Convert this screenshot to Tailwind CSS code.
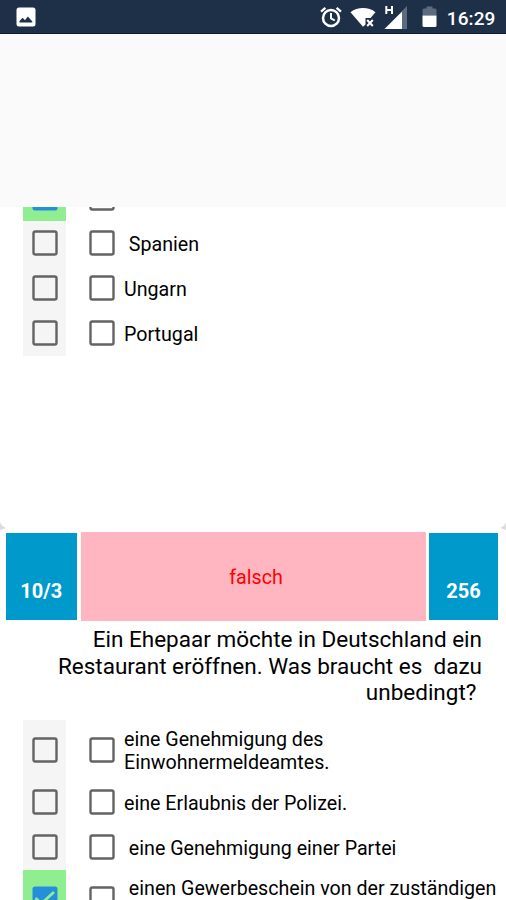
<!DOCTYPE html>
<html lang="de">
<head>
    <meta charset="UTF-8" />
    <meta name="viewport" content="width=device-width, initial-scale=1.0"/>
    <title>Einbürgerungstest</title>
    <script src="https://cdn.jsdelivr.net/npm/@tailwindcss/browser@4"></script>
</head>

<body class="bg-white text-black font-['Roboto',sans-serif] h-[900px] overflow-hidden flex flex-col">

    <!-- Checkbox-Symbole -->
    <svg class="hidden">
        <symbol id="box" viewBox="0 0 26 26">
            <rect x="1.5" y="1.5" width="23" height="23" rx="1.8" fill="none" stroke="#636363" stroke-width="2.4"/>
        </symbol>
        <symbol id="checked" viewBox="0 0 26 26">
            <rect x="0.5" y="0.5" width="25" height="25" rx="2.5" fill="#258fdc"/>
            <path d="M3.5 12l6 5.500L22 6" fill="none" stroke="#90ee90" stroke-width="2.8"/>
        </symbol>
    </svg>

    <!-- Statusleiste -->
    <header class="h-[34px] shrink-0 bg-[#1e3048] border-b border-[#0d1530] text-white flex items-center justify-between pl-4 pr-[10.5px]">
        <svg class="w-5 h-5" viewBox="0 0 20 20">
            <rect x="0.5" y="0.5" width="19" height="19" rx="2.5" fill="#fff"/>
            <path d="M3.5 15.5V14l3.2-3.2 2.2 2.4 3-3.8 4.4 5v1.1z" fill="#1e3048"/>
        </svg>
        <div class="flex items-center">
            <svg class="w-[22px] h-[22px] mr-[8px]" viewBox="0 0 22 22" fill="none" stroke="#fff">
                <circle cx="11" cy="12" r="8" stroke-width="2.5"/>
                <path d="M11 7v5.300l3.800 2.200" stroke-width="2"/>
                <path d="M1 5.600l4.400-3.700M21 5.600l-4.400-3.700" stroke-width="2.300"/>
            </svg>
            <svg class="w-[26px] h-[22px] mr-[7.5px]" viewBox="0 0 26 22">
                <path d="M0.500 6.200C7.500.6 18.500.6 25.500 6.200L20.500 12H15.500V18.500L13 20.800z" fill="#fff"/>
                <path d="M17.200 14l5.600 6M22.800 14l-5.600 6" stroke="#fff" stroke-width="2"/>
            </svg>
            <svg class="w-[24px] h-[26px] mr-[14px]" viewBox="0 0 24 26">
                <path d="M18 7L23 2v23h-5z" fill="#5c6b7e"/>
                <path d="M0.500 25L18 7.500V25z" fill="#fff"/>
                <path d="M2.300 2v8M8 2v8M2.300 6H8" stroke="#fff" stroke-width="2"/>
            </svg>
            <svg class="w-[15px] h-[22px] mr-[10px]" viewBox="0 0 15 22">
                <path d="M0.500 9.500V4q0-1.500 1.500-1.500h2.500V0.500h6v2h2.500q1.500 0 1.500 1.500v5.500z" fill="#5c6b7e"/>
                <path d="M0.500 9.500h14v10q0 1.500-1.500 1.500H2q-1.500 0-1.500-1.500z" fill="#fff"/>
            </svg>
            <span class="text-[19px] leading-none font-medium tracking-[0.1px] pt-[3px]">16:29</span>
        </div>
    </header>

    <!-- Titelbereich -->
    <div class="h-[173px] shrink-0 bg-[#fafafa]"></div>

    <!-- Vorherige Frage -->
    <section class="h-[323px] shrink-0 overflow-hidden flex flex-col text-[19.65px] leading-[23px]">
        <div class="h-[13.5px] shrink-0 flex items-end overflow-hidden">
            <div class="w-[42.5px] h-[45px] shrink-0 ml-[23px] pl-[2px] bg-[#90ee90] flex items-center justify-center">
                <svg class="w-[26px] h-[26px]"><use href="#checked"/></svg>
            </div>
            <div class="h-[45px] ml-[23.5px] flex items-center">
                <svg class="w-[26px] h-[26px]"><use href="#box"/></svg>
            </div>
        </div>
        <div class="h-[45px] shrink-0 flex items-center">
            <div class="w-[42.5px] h-full ml-[23px] pl-[1.5px] bg-[#f5f5f5] flex items-center justify-center">
                <svg class="w-[26px] h-[26px]"><use href="#box"/></svg>
            </div>
            <svg class="w-[26px] h-[26px] ml-[23.5px]"><use href="#box"/></svg>
            <p class="ml-[9px] pt-[2px] whitespace-pre"> Spanien</p>
        </div>
        <div class="h-[45px] shrink-0 flex items-center">
            <div class="w-[42.5px] h-full ml-[23px] pl-[1.5px] bg-[#f5f5f5] flex items-center justify-center">
                <svg class="w-[26px] h-[26px]"><use href="#box"/></svg>
            </div>
            <svg class="w-[26px] h-[26px] ml-[23.5px]"><use href="#box"/></svg>
            <p class="ml-[9px] pt-[2px]">Ungarn</p>
        </div>
        <div class="h-[45px] shrink-0 flex items-center">
            <div class="w-[42.5px] h-full ml-[23px] pl-[1.5px] bg-[#f5f5f5] flex items-center justify-center">
                <svg class="w-[26px] h-[26px]"><use href="#box"/></svg>
            </div>
            <svg class="w-[26px] h-[26px] ml-[23.5px]"><use href="#box"/></svg>
            <p class="ml-[9px] pt-[2px]">Portugal</p>
        </div>
        <!-- Kartenecken -->
        <div class="mt-auto flex justify-between">
            <svg class="w-[6px] h-[8px]" viewBox="0 0 6 8"><path d="M0 0q1.500 4.500 6 6L0 8z" fill="#dcdcdc"/></svg>
            <svg class="w-[6px] h-[8px]" viewBox="0 0 6 8"><path d="M6 0q-1.500 4.500-6 6L6 8z" fill="#dcdcdc"/></svg>
        </div>
    </section>

    <!-- Frage 10/3 -->
    <section class="pt-[1.5px]">
        <div class="flex items-center pl-[6px] h-[89.5px]">
            <div class="w-[70.5px] h-[87px] bg-[#0099cc] text-white text-[20px] leading-[23px] font-bold flex items-end justify-center pb-[17px]">10/3</div>
            <div class="w-[345px] h-full ml-[4.500px] bg-[#ffb6c1] text-[#ff0000] text-[19.65px] leading-[23px] flex items-center justify-center pt-[3px] pl-[5px]">falsch</div>
            <div class="w-[69px] h-[87px] ml-[3px] bg-[#0099cc] text-white text-[20px] leading-[23px] font-bold flex items-end justify-center pb-[17px]">256</div>
        </div>

        <h1 class="h-[98.5px] pt-[5px] pr-[24px] text-[22.5px] leading-[26.700px] text-right whitespace-pre">Ein Ehepaar möchte in Deutschland ein
Restaurant eröffnen. Was braucht es  dazu
unbedingt? </h1>

        <div class="text-[19.65px] leading-[23px]">
            <div class="h-[60px] flex items-center">
                <div class="w-[42.5px] h-full ml-[23px] pl-[1.5px] bg-[#f5f5f5] flex items-center justify-center">
                    <svg class="w-[26px] h-[26px]"><use href="#box"/></svg>
                </div>
                <svg class="w-[26px] h-[26px] ml-[23.5px]"><use href="#box"/></svg>
                <p class="ml-[9px] pt-[2px]">eine Genehmigung des<br>Einwohnermeldeamtes.</p>
            </div>
            <div class="h-[45px] flex items-center">
                <div class="w-[42.5px] h-full ml-[23px] pl-[1.5px] bg-[#f5f5f5] flex items-center justify-center">
                    <svg class="w-[26px] h-[26px]"><use href="#box"/></svg>
                </div>
                <svg class="w-[26px] h-[26px] ml-[23.5px]"><use href="#box"/></svg>
                <p class="ml-[9px] pt-[2px]">eine Erlaubnis der Polizei.</p>
            </div>
            <div class="h-[45px] flex items-center">
                <div class="w-[42.5px] h-full ml-[23px] pl-[1.5px] bg-[#f5f5f5] flex items-center justify-center">
                    <svg class="w-[26px] h-[26px]"><use href="#box"/></svg>
                </div>
                <svg class="w-[26px] h-[26px] ml-[23.5px]"><use href="#box"/></svg>
                <p class="ml-[9px] pt-[2px] whitespace-pre"> eine Genehmigung einer Partei</p>
            </div>
            <div class="h-[60px] flex items-center">
                <div class="w-[42.5px] h-full ml-[23px] pl-[1.5px] bg-[#90ee90] flex items-center justify-center">
                    <svg class="w-[26px] h-[26px] mb-[1px]"><use href="#checked"/></svg>
                </div>
                <svg class="w-[26px] h-[26px] ml-[23.5px] mb-[1px]"><use href="#box"/></svg>
                <p class="ml-[9px] h-[46px] whitespace-pre"> einen Gewerbeschein von der zuständigen</p>
            </div>
        </div>
    </section>

</body>
</html>
